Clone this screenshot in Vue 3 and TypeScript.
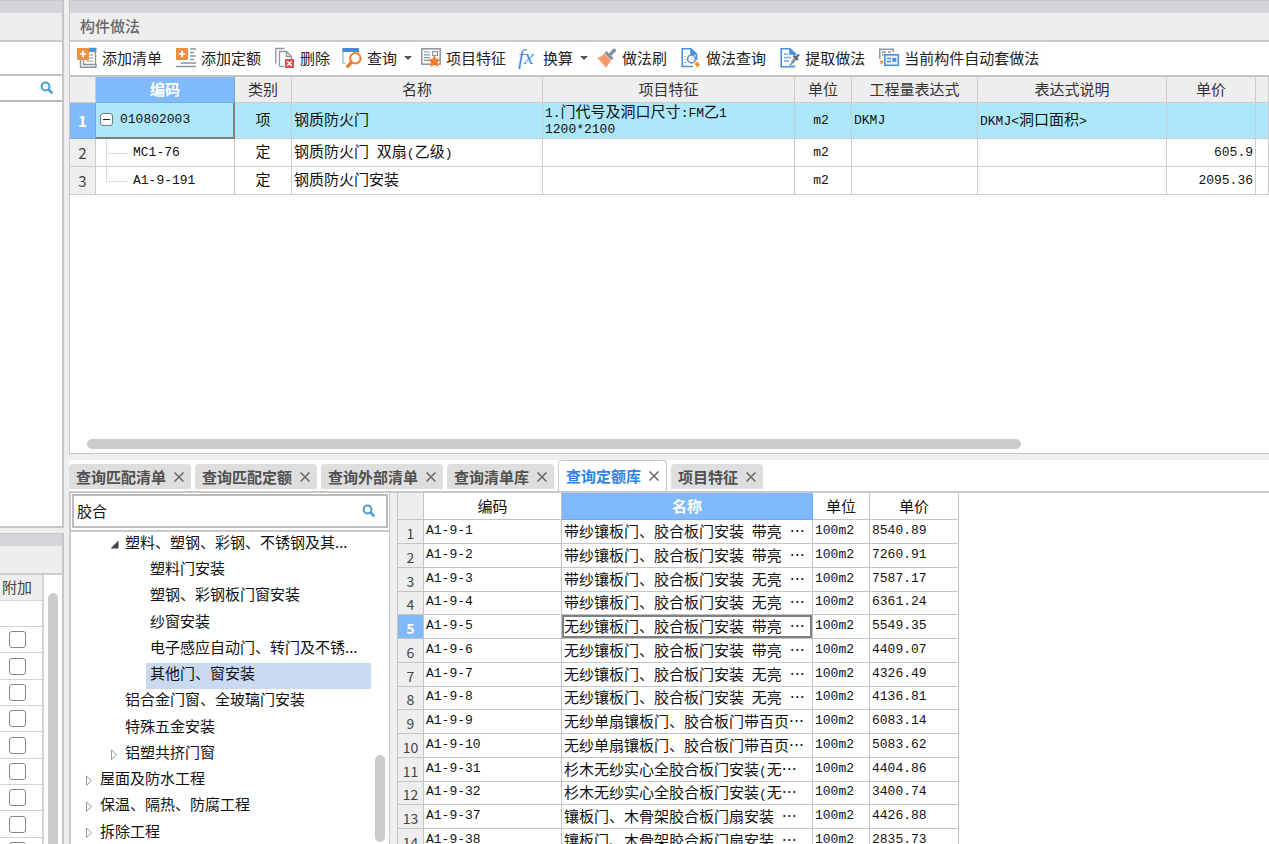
<script setup lang="ts">
import { ref } from 'vue'

interface Run { text: string; half: boolean }
interface Tool { icon: string; label: string; drop?: boolean }
interface WorkRow { code: string; kind: string; name: string; feature: string[]; unit: string; expr: string; note: string; price: string; parent?: boolean }
interface TreeRow { label: string; level: number; state: 'open' | 'closed' | 'leaf' }

const tools: Tool[] = [
  { icon: 'list', label: '添加清单' },
  { icon: 'quota', label: '添加定额' },
  { icon: 'remove', label: '删除' },
  { icon: 'query', label: '查询', drop: true },
  { icon: 'feature', label: '项目特征' },
  { icon: 'fx', label: '换算', drop: true },
  { icon: 'brush', label: '做法刷' },
  { icon: 'search', label: '做法查询' },
  { icon: 'extract', label: '提取做法' },
  { icon: 'auto', label: '当前构件自动套做法' },
]

const workRows: WorkRow[] = [
  { code: '010802003', kind: '项', name: '钢质防火门', feature: ['1.门代号及洞口尺寸:FM乙1', '1200*2100'], unit: 'm2', expr: 'DKMJ', note: 'DKMJ<洞口面积>', price: '', parent: true },
  { code: 'MC1-76', kind: '定', name: '钢质防火门 双扇(乙级)', feature: [], unit: 'm2', expr: '', note: '', price: '605.9' },
  { code: 'A1-9-191', kind: '定', name: '钢质防火门安装', feature: [], unit: 'm2', expr: '', note: '', price: '2095.36' },
]

const tabs = ['查询匹配清单', '查询匹配定额', '查询外部清单', '查询清单库', '查询定额库', '项目特征']
const activeTab = ref('查询定额库')

const tree: TreeRow[] = [
  { label: '塑料、塑钢、彩钢、不锈钢及其...', level: 1, state: 'open' },
  { label: '塑料门安装', level: 2, state: 'leaf' },
  { label: '塑钢、彩钢板门窗安装', level: 2, state: 'leaf' },
  { label: '纱窗安装', level: 2, state: 'leaf' },
  { label: '电子感应自动门、转门及不锈...', level: 2, state: 'leaf' },
  { label: '其他门、窗安装', level: 2, state: 'leaf' },
  { label: '铝合金门窗、全玻璃门安装', level: 1, state: 'leaf' },
  { label: '特殊五金安装', level: 1, state: 'leaf' },
  { label: '铝塑共挤门窗', level: 1, state: 'closed' },
  { label: '屋面及防水工程', level: 0, state: 'closed' },
  { label: '保温、隔热、防腐工程', level: 0, state: 'closed' },
  { label: '拆除工程', level: 0, state: 'closed' },
]
const selectedNode = ref('其他门、窗安装')

const quotas: [string, string, string][] = [
  ['A1-9-1', '带纱镶板门、胶合板门安装 带亮 …', '8540.89'],
  ['A1-9-2', '带纱镶板门、胶合板门安装 带亮 …', '7260.91'],
  ['A1-9-3', '带纱镶板门、胶合板门安装 无亮 …', '7587.17'],
  ['A1-9-4', '带纱镶板门、胶合板门安装 无亮 …', '6361.24'],
  ['A1-9-5', '无纱镶板门、胶合板门安装 带亮 …', '5549.35'],
  ['A1-9-6', '无纱镶板门、胶合板门安装 带亮 …', '4409.07'],
  ['A1-9-7', '无纱镶板门、胶合板门安装 无亮 …', '4326.49'],
  ['A1-9-8', '无纱镶板门、胶合板门安装 无亮 …', '4136.81'],
  ['A1-9-9', '无纱单扇镶板门、胶合板门带百页…', '6083.14'],
  ['A1-9-10', '无纱单扇镶板门、胶合板门带百页…', '5083.62'],
  ['A1-9-31', '杉木无纱实心全胶合板门安装(无…', '4404.86'],
  ['A1-9-32', '杉木无纱实心全胶合板门安装(无…', '3400.74'],
  ['A1-9-37', '镶板门、木骨架胶合板门扇安装 …', '4426.88'],
  ['A1-9-38', '镶板门、木骨架胶合板门扇安装 …', '2835.73'],
]
const selectedQuota = ref(4)
const keyword = ref('胶合')
const leftKeyword = ref('')
const extras = ref<boolean[]>(Array(9).fill(false))

// Latin letters and digits are set in a half-width face beside full-width characters.
function runs(text: string): Run[] {
  return (text.match(/[\x20-\x7e]+|[^\x20-\x7e]+/g) ?? []).map(t => ({ text: t, half: /^[\x20-\x7e]/.test(t) }))
}
</script>

<template>
  <div class="app">
    <aside class="side">
      <section class="side-top">
        <div class="strip"></div>
        <div class="bar"></div>
        <div class="side-tools"></div>
        <div class="side-search">
          <input v-model="leftKeyword" type="text" aria-label="搜索" />
          <button class="glass" type="button" aria-label="搜索">
            <svg width="14" height="14" viewBox="0 0 14 14"><circle cx="5.5" cy="5.5" r="3.9" fill="none" stroke="#4a9fd0" stroke-width="2" /><path d="M8.5 8.5 L12.3 12.3" stroke="#4a9fd0" stroke-width="2.6" /></svg>
          </button>
        </div>
      </section>
      <section class="side-bottom">
        <div class="strip"></div>
        <div class="bar"></div>
        <div class="side-grid">
          <table>
            <thead><tr><th>附加</th></tr></thead>
            <tbody>
              <tr><td></td></tr>
              <tr v-for="(_, i) in extras" :key="i"><td><input v-model="extras[i]" type="checkbox" aria-label="附加" /></td></tr>
            </tbody>
          </table>
          <div class="vthumb"></div>
        </div>
      </section>
    </aside>

    <main class="main">
      <section class="work">
        <div class="strip"></div>
        <h1 class="bar title">构件做法</h1>
        <div class="toolbar">
          <button v-for="t in tools" :key="t.label" type="button" class="tool" :class="{ drop: t.drop }">
            <svg class="icon" width="20" height="22" viewBox="0 0 20 22">
              <g v-if="t.icon === 'list'">
                <path d="M11 4.5 H18.5 V17.5 H6.5 V12" fill="#fff" stroke="#8c969f" stroke-width="1.4" />
                <path d="M3.5 13 V20.3 H16" fill="none" stroke="#8c969f" stroke-width="1.4" />
                <path d="M19 17 V20.3 H15" fill="none" stroke="#8c969f" stroke-width="1.4" />
                <path d="M11.5 2.5 H19.5" stroke="#4a90e2" stroke-width="3.5" />
                <path d="M12.5 8 H16 M12.5 11 H16 M9 14.2 H16" stroke="#a9b1b8" stroke-width="1.3" />
                <rect width="12" height="12" y="1" fill="#ee9140" /><path d="M6 3.8 V10.2 M2.8 7 H9.2" stroke="#fff" stroke-width="1.7" />
              </g>
              <g v-else-if="t.icon === 'quota'">
                <path d="M14 2 H20 M14 5.5 H18 M14 9 H20 M14 12.5 H18 M5 16 H20 M0 19.5 H20" stroke="#8c969f" stroke-width="1.5" />
                <rect width="12" height="12" y="1" fill="#ee9140" /><path d="M6 3.8 V10.2 M2.8 7 H9.2" stroke="#fff" stroke-width="1.7" />
              </g>
              <g v-else-if="t.icon === 'remove'" fill="none" stroke="#8c969f" stroke-width="1.3">
                <path d="M.8 16.5 V1.5 H9.5" /><path d="M4.5 19.5 V4.5 H11.5 L16.5 9.5 V12 M11.5 4.5 V9.5 H16.5 M4.5 19.5 H9" />
                <rect x="10" y="12" width="9" height="9" fill="#dc4c55" stroke="none" /><path d="M12.2 14.2 L16.8 18.8 M16.8 14.2 L12.2 18.8" stroke="#fff" />
              </g>
              <g v-else-if="t.icon === 'query'" fill="none">
                <path d="M1 4 V16.5 H3.5 M16.5 4 V6" stroke="#8db8e8" stroke-width="1.2" /><path d="M.3 3 H17" stroke="#438bdc" stroke-width="4" />
                <circle cx="13.3" cy="11.3" r="5.2" fill="#fff" stroke="#f27c2b" stroke-width="2" /><path d="M9.4 15.3 L4.8 20.3" stroke="#f27c2b" stroke-width="3.2" />
              </g>
              <g v-else-if="t.icon === 'feature'">
                <rect x=".8" y="1.8" width="18.4" height="15.4" fill="#fff" stroke="#8c969f" stroke-width="1.5" />
                <path d="M3 5 H9 M3 7.8 H9 M3 10.6 H9 M3 13.4 H9 M16.5 11 H17.5" stroke="#8c969f" stroke-width="1.2" /><rect x="11.5" y="4.5" width="5" height="4" fill="none" stroke="#8c969f" stroke-width="1.2" />
                <path d="M13.3 8 L15.2 11.9 L19.6 12.5 L16.4 15.5 L17.2 19.9 L13.3 17.8 L9.4 19.9 L10.2 15.5 L7 12.5 L11.4 11.9 Z" fill="#f07b2d" />
              </g>
              <text v-else-if="t.icon === 'fx'" x="0" y="17" class="fx">fx</text>
              <g v-else-if="t.icon === 'brush'">
                <path d="M0 10.5 C3 10.5 5 9 7 6.5 L14 13.5 L9 20.5 Z" fill="#fa9769" />
                <path d="M7.3 6.2 L9.5 4 L12 6.4 L15.8 2 Q18 .8 19 3 Q19.3 4.5 18 5.3 L14.2 8.8 L16.5 11 L14.3 13.3 Z" fill="#87919a" />
              </g>
              <g v-else-if="t.icon === 'search'" fill="none">
                <path d="M5 19.5 H1.2 V1.8 H10 L15.5 7 V13 M10 1.8 V7 H15.5 M5 19.5 H12" stroke="#4a90e2" stroke-width="1.6" /><path d="M10 1.5 L16 7.5 H10 Z" fill="#4a90e2" />
                <circle cx="10.5" cy="12" r="4" fill="#e9f1fc" stroke="#7387bf" stroke-width="1.5" /><path d="M3.5 9.5 H5 M3.5 12.5 H5 M3.5 15.5 H6" stroke="#8bb7ec" />
                <path d="M13.5 17 L16 14.5 L19 17.5 L16.5 20.5 Z" fill="#f59322" />
              </g>
              <g v-else-if="t.icon === 'extract'" fill="none">
                <path d="M14 18 V19.8 H1.2 V1.8 H10 L15.5 7 V8 M10 1.8 V7 H15.5" stroke="#4a90e2" stroke-width="1.6" /><path d="M10 1.5 L16 7.5 H10 Z" fill="#4a90e2" />
                <path d="M4 7 H8 M4 10.5 H11 M4 14 H9" stroke="#7ea9d8" stroke-width="1.3" /><path d="M9 20 L12 16" stroke="#5bb7bb" stroke-width="1.8" />
                <path d="M12 16 L16 10.5" stroke="#8c969f" stroke-width="3" /><path d="M13.5 8.5 L18 13 M16.5 10 L19 7.5" stroke="#5a646d" stroke-width="2.2" />
              </g>
              <g v-else fill="none">
                <path d="M.8 12 V2.2 H14.2 V5" stroke="#8c969f" stroke-width="1.5" /><path d="M3 5 H7 M9 5 H12 M3 8 H4.5" stroke="#8c969f" stroke-width="1.4" />
                <path d="M1 14.5 H3.5 L2 17" stroke="#f07b2d" stroke-width="1.3" />
                <rect x="5.8" y="7.8" width="13.5" height="10.5" fill="#eef5ff" stroke="#4a90e2" stroke-width="1.6" /><path d="M8 11.5 H12 M8 14.5 H12" stroke="#4a90e2" stroke-width="1.4" /><rect x="13.3" y="10.8" width="4" height="4" fill="#4a90e2" />
              </g>
            </svg>
            <span>{{ t.label }}</span>
            <i v-if="t.drop" class="caret"></i>
          </button>
        </div>
        <div class="work-scroll">
          <table class="grid work-grid">
            <colgroup><col class="c-num" /><col class="c-code" /><col class="c-kind" /><col class="c-name" /><col class="c-feature" /><col class="c-kind" /><col class="c-expr" /><col class="c-note" /><col class="c-price" /><col /></colgroup>
            <thead>
              <tr><th></th><th class="on">编码</th><th>类别</th><th>名称</th><th>项目特征</th><th>单位</th><th>工程量表达式</th><th>表达式说明</th><th>单价</th><th></th></tr>
            </thead>
            <tbody>
              <tr v-for="(r, i) in workRows" :key="r.code" :class="{ current: r.parent }">
                <th scope="row">{{ i + 1 }}</th>
                <td class="code half" :class="{ child: !r.parent, last: i === 2 }"><button v-if="r.parent" type="button" class="fold" aria-label="折叠"></button>{{ r.code }}</td>
                <td class="mid">{{ r.kind }}</td>
                <td><span v-for="(s, k) in runs(r.name)" :key="k" :class="{ half: s.half }">{{ s.text }}</span></td>
                <td class="feature"><div v-for="line in r.feature" :key="line"><span v-for="(s, k) in runs(line)" :key="k" :class="{ half: s.half }">{{ s.text }}</span></div></td>
                <td class="mid half unit">{{ r.unit }}</td>
                <td class="half">{{ r.expr }}</td>
                <td><span v-for="(s, k) in runs(r.note)" :key="k" :class="{ half: s.half }">{{ s.text }}</span></td>
                <td class="half num">{{ r.price }}</td>
                <td></td>
              </tr>
            </tbody>
          </table>
        </div>
        <div class="htrack"><div class="hthumb"></div></div>
      </section>

      <section class="lookup">
        <nav class="tabs">
          <div v-for="t in tabs" :key="t" class="tab" :class="{ active: t === activeTab }">
            <button type="button" class="tab-name" @click="activeTab = t">{{ t }}</button>
            <button type="button" class="tab-close" aria-label="关闭"><svg width="10" height="10" viewBox="0 0 10 10"><path d="M.5 .5 L9.5 9.5 M9.5 .5 L.5 9.5" stroke="#666" stroke-width="1.5" /></svg></button>
          </div>
        </nav>
        <div class="panes">
          <div class="tree-pane">
            <div class="find">
              <input v-model="keyword" type="text" aria-label="关键字" />
              <button class="glass" type="button" aria-label="查找">
                <svg width="14" height="14" viewBox="0 0 14 14"><circle cx="5.5" cy="5.5" r="3.9" fill="none" stroke="#4a9fd0" stroke-width="2" /><path d="M8.5 8.5 L12.3 12.3" stroke="#4a9fd0" stroke-width="2.6" /></svg>
              </button>
            </div>
            <div class="tree-body">
              <ul class="tree">
                <li v-for="n in tree" :key="n.label" :class="['lv' + n.level, { chosen: n.label === selectedNode }]">
                  <svg class="twist" width="9" height="13" viewBox="0 0 9 13">
                    <path v-if="n.state === 'open'" d="M8.5 2.5 V10.5 H.5 Z" fill="#444" />
                    <path v-else-if="n.state === 'closed'" d="M1.5 2 V11.5 L6.5 6.75 Z" fill="#fff" stroke="#999" />
                  </svg>
                  <button type="button" @click="selectedNode = n.label">{{ n.label }}</button>
                </li>
              </ul>
              <div class="tree-track"><div class="tree-thumb"></div></div>
            </div>
          </div>
          <div class="result">
            <table class="grid quota-grid">
              <colgroup><col class="c-num" /><col class="c-code" /><col class="c-name" /><col class="c-kind" /><col class="c-price" /></colgroup>
              <thead><tr><th class="corner"></th><th>编码</th><th class="on">名称</th><th>单位</th><th>单价</th></tr></thead>
              <tbody>
                <tr v-for="(q, i) in quotas" :key="q[0]" :class="{ picked: i === selectedQuota }" @click="selectedQuota = i">
                  <th scope="row">{{ i + 1 }}</th>
                  <td class="half">{{ q[0] }}</td>
                  <td class="name"><span v-for="(s, k) in runs(q[1])" :key="k" :class="{ half: s.half }">{{ s.text }}</span></td>
                  <td class="half">100m2</td>
                  <td class="half">{{ q[2] }}</td>
                </tr>
              </tbody>
            </table>
          </div>
        </div>
      </section>
    </main>
  </div>
</template>

<style>
html, body { overflow: hidden; }
</style>

<style scoped>
* { box-sizing: border-box; }
.app {
  display: grid; grid-template-columns: 64px minmax(0, 1fr); column-gap: 5px; height: 100vh; overflow: hidden;
  background: #eee; color: #111; font: 15px/20px "Noto Sans CJK SC", sans-serif;
}
button, input { font: inherit; color: inherit; }
button { padding: 0; border: 0; background: none; }
table { border-collapse: separate; border-spacing: 0; table-layout: fixed; }
th, td { padding: 0; font-weight: 400; }
.strip { flex: none; height: 13px; background: #d3d5db; border-top: 1px solid #c6c8ce; }
.bar { flex: none; height: 29px; background: #eee; border-bottom: 2px solid #c8ccd0; }
.glass { display: flex; flex: none; }

.side { display: grid; grid-template: 528fr 5px 311fr / minmax(0, 1fr); min-height: 0; }
.side-top { display: flex; flex-direction: column; background: #fff; border: solid #c4c6ca; border-width: 0 2px 2px 0; }
.side-tools { height: 34px; border-bottom: 2px solid #c0c0c0; }
.side-search { display: flex; align-items: center; height: 26px; padding-right: 8px; border-bottom: 2px solid #bbb; }
.side-search input { flex: 1; width: 0; min-width: 0; padding: 0; border: 0; outline: 0; }
.side-bottom { grid-row: 3; display: flex; flex-direction: column; min-height: 0; overflow: hidden; background: #fff; border-right: 2px solid #c4c6ca; }
.side-grid { display: flex; min-height: 0; flex: 1; overflow: hidden; }
.side-grid table { width: 44px; height: max-content; flex: none; }
.side-grid th, .side-grid td { height: 26px; border: solid #d4d4d4; border-width: 0 2px 1px 0; text-align: center; }
.side-grid th { background: #eee; color: #444; padding: 0 8px 1px 0; }
.side-grid tbody tr:nth-child(3n) td { height: 27px; }
.side-grid td { padding-right: 8px; line-height: 0; }
.side-grid input { appearance: none; width: 17px; height: 17px; margin: 0; border: 1px solid #888; border-radius: 3px; background: #fff; }
.side-grid input:checked { background: #4a90e2; }
.vthumb { width: 10px; margin: 18px 0 0 4px; border-radius: 5px 5px 0 0; background: #cbcbcb; }

.main { display: grid; grid-template-rows: 454fr 390fr; min-width: 0; min-height: 0; }
.work { display: flex; flex-direction: column; min-height: 0; background: #fff; border: solid #c4c6ca; border-width: 0 0 1px 1px; }
.title { margin: 0; padding: 3px 10px 0; font-size: 15px; line-height: 20px; font-weight: 500; color: #666; }
.toolbar { display: flex; flex: none; align-items: center; gap: 4px; height: 35px; padding: 0 2px 1px; border-bottom: 2px solid #c4c4c4; overflow: hidden; }
.tool { display: flex; flex: none; align-items: center; height: 25px; padding: 0 5px; gap: 5px; border-radius: 4px; color: #222; white-space: nowrap; box-shadow: 0 0 1px #ddd; }
.tool.drop { margin: 0 -2px; padding-right: 2px; box-shadow: none; }
.icon { flex: none; overflow: visible; }
.fx { font: italic 22px "Liberation Serif", serif; fill: #4a8fdc; }
.caret { margin-left: 2px; border: 4px solid transparent; border-top-color: #555; border-bottom: 0; }

.half { font: 13px/18px "Liberation Mono", "Noto Sans CJK SC", monospace; white-space: pre; }
span.half { line-height: 10px; }
.c-num { width: 26px; }
.c-code { width: 139px; }
.c-kind { width: 57px; }
.c-name { width: 251px; }
.c-feature { width: 252px; }
.c-expr { width: 126px; }
.c-note { width: 189px; }
.c-price { width: 89px; }
.grid th, .grid td { border: solid #ccc; border-width: 0 1px 1px 0; white-space: nowrap; }
.grid thead th { background: #eee; color: #333; }
.grid thead th.on { background: #80bafa; color: #fff; font-weight: 700; border-color: #6fabeb; }
.grid tbody th { background: #eee; color: #444; }
.grid td { padding-left: 2px; }

.work-scroll { flex: 1; min-height: 0; overflow: hidden; }
.work-grid { width: 100%; }
.work-grid thead th { height: 26px; padding-bottom: 2px; }
.work-grid tbody tr { height: 28px; }
.work-grid tbody tr.current { height: 36px; }
.work-grid tbody td { padding-bottom: 3px; }
.work-grid tbody td.half { padding-bottom: 0; }
.work-grid .current td { background: #ade8fa; }
.work-grid .current th { background: #80bafa; color: #fff; font-weight: 700; border-color: #6fabeb; }
.work-grid .mid { text-align: center; padding-left: 0; }
.work-grid .unit { padding-right: 4px; }
.work-grid .num { text-align: right; padding-right: 2px; }
.feature { line-height: 15px; }
.work-grid .code { position: relative; padding-left: 4px; }
.work-grid .current .code { border-right: 2px solid #808080; border-bottom: 2px solid #808080; }
.work-grid .child { padding-left: 37px; }
.child::before { content: ""; position: absolute; left: 10px; top: 0; width: 21px; height: 14px; border: solid #ddd; border-width: 0 0 1px 1px; }
.child:not(.last)::after { content: ""; position: absolute; left: 10px; top: 0; bottom: 0; border-left: 1px solid #ddd; }
.fold { position: relative; width: 13px; height: 13px; margin-right: 7px; border: 1px solid #777; border-radius: 3px; background: #fff; vertical-align: middle; }
.fold::before { content: ""; position: absolute; left: 2px; right: 2px; top: 5px; height: 1px; background: #222; }
.htrack { flex: none; height: 14px; padding-left: 17px; }
.hthumb { width: 79%; height: 10px; border-radius: 5px; background: #cbcbcb; }

.lookup { display: flex; flex-direction: column; min-height: 0; background: #fff; border-top: 6px solid #eee; }
.tabs { display: flex; flex: none; align-items: flex-end; gap: 4px; height: 33px; padding-bottom: 2px; border-bottom: 2px solid #c4cacf; }
.tab { display: flex; align-items: center; gap: 8px; height: 25px; padding: 0 7px; border-radius: 4px 4px 0 0; background: #dedede; color: #505050; }
.tab.active { height: 31px; margin-bottom: -2px; border: 1px solid #c4cacf; border-bottom: 0; background: #fff; color: #2f83e4; }
.tab-name { font-weight: 700; }
.tab-close { display: flex; }
.panes { display: flex; flex: 1; min-height: 0; background: #eee; }
.tree-pane { display: flex; flex-direction: column; width: 321px; flex: none; background: #fff; border: solid #c4cacf; border-width: 0 1px 0 2px; }
.find { display: flex; flex: none; align-items: center; height: 34px; margin: 1px 1px 2px; padding: 0 10px 0 3px; border: 2px solid #bcbcbc; }
.find input { flex: 1; min-width: 0; padding: 0; border: 0; outline: 0; background: none; }
.tree-body { display: flex; flex: 1; min-height: 0; border-top: 2px solid #c4cacf; }
.tree { flex: 1; min-width: 0; margin: 0; padding: 0; list-style: none; overflow: hidden; }
.tree li { display: flex; align-items: center; height: 26px; }
.tree li:nth-child(4n) { height: 27px; }
.tree li button { flex: 1; height: 100%; padding: 0 0 6px 4px; text-align: left; white-space: nowrap; }
.tree .chosen button { background: #c9d9f0; }
.twist { flex: none; margin: 0 2px 2px 0; }
.lv0 { padding-left: 14px; }
.lv1 { padding-left: 39px; }
.lv2 { padding-left: 64px; }
.tree-track { display: flex; align-items: flex-end; width: 18px; padding: 0 4px 2px; }
.tree-thumb { width: 10px; height: 28%; border-radius: 5px; background: #cbcbcb; }
.result { flex: 1; min-width: 0; margin-left: 7px; border-left: 1px solid #c4c4c4; overflow: hidden; background: #fff; }
.quota-grid { width: 561px; }
.quota-grid .c-code { width: 138px; }
.quota-grid thead th { height: 27px; background: #fff; color: #111; }
.quota-grid thead th.corner { background: #eee; }
.quota-grid th, .quota-grid td { border-color: #c4c4c4; }
.quota-grid tbody tr { height: 24px; }
.quota-grid tbody tr:nth-child(4n) { height: 23px; }
.quota-grid tbody td { padding-bottom: 2px; line-height: 18px; }
.quota-grid tbody th { padding-top: 2px; font-size: 14px; line-height: 18px; }
.quota-grid .picked th { background: #80bafa; color: #fff; font-weight: 700; }
.quota-grid .picked .name { box-shadow: inset 0 0 0 2px #808080; }
</style>
